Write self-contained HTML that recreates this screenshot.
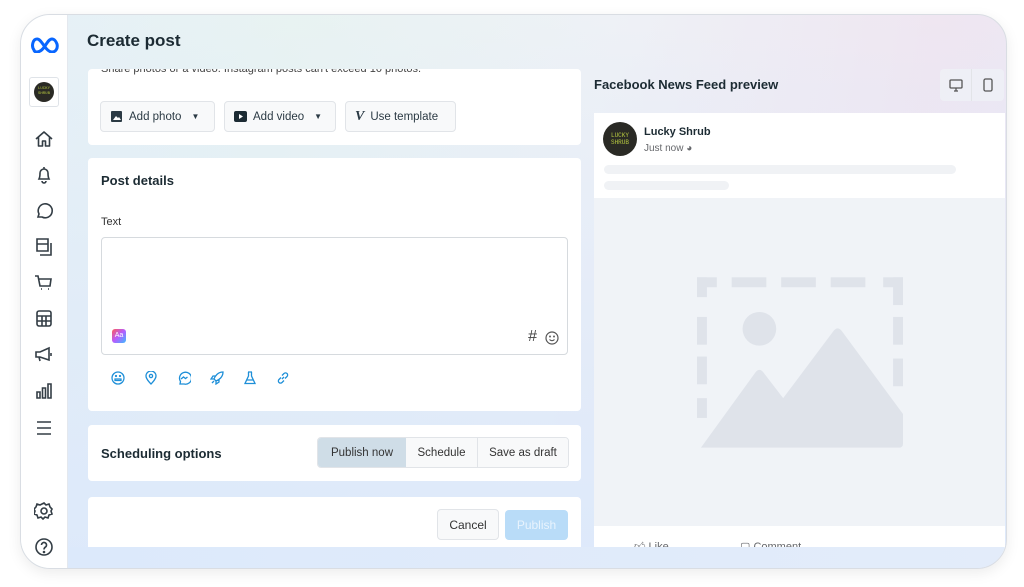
<!DOCTYPE html>
<html><head><meta charset="utf-8"><style>
*{box-sizing:border-box;margin:0;padding:0}
body{width:1024px;height:587px;background:#fff;font-family:"Liberation Sans",sans-serif;position:relative;overflow:hidden;color:#1c2b33}
.frame{position:absolute;left:20px;top:14px;width:987px;height:555px;border-radius:30px;border:1px solid #d9dde3;overflow:hidden;box-shadow:0 4px 14px rgba(0,0,0,.08);background:linear-gradient(100deg,#e6f0f7 0%,#e8f3f2 25%,#eef1f6 55%,#efe6f1 85%,#ece8f4 100%)}
.main{position:absolute;left:47px;top:0;right:0;bottom:0;background:linear-gradient(180deg,rgba(255,255,255,0) 0%,rgba(220,232,250,.6) 60%,#dde9fb 100%)}
.side{position:absolute;left:0;top:0;width:47px;height:100%;background:#fff;border-right:1px solid #e4e8ee}
.side svg{position:absolute;left:13px}
.card{position:absolute;background:#fff;border-radius:4px}
.btn{position:absolute;height:31px;border:1px solid #e1e4e8;border-radius:4px;background:#f8f9fa;font-size:11.5px;display:flex;align-items:center;padding:0 9px;gap:6px;color:#2b3a44;white-space:nowrap}
h1{position:absolute;left:66px;top:16px;font-size:17px;font-weight:bold;color:#1c2b33}
.t{position:absolute;font-size:13px;font-weight:bold;color:#1c2b33}
.bi{position:absolute;top:356px}
</style></head><body>
<div class="frame">
<div class="main"></div>
<div class="side">
<svg style="left:10px;top:22px" width="29" height="16" viewBox="0 0 29 16"><path d="M3 13C0 9 2 2 6 2c3 0 5 4 8 8s5 5 7 5c4 0 6-4 5-8-1-3-3-5-5-5-3 0-5 4-7 7s-5 6-8 6c-2 0-3-1-3-2" fill="none" stroke="#0866ff" stroke-width="3" stroke-linecap="round"/></svg>
<div style="position:absolute;left:8px;top:62px;width:30px;height:30px;border:1px solid #dfe3e8;border-radius:3px;background:#fff"><div style="margin:4px;width:20px;height:20px;border-radius:50%;background:#2a2a25;font-size:4px;color:#b7c940;text-align:center;line-height:5px;padding-top:5px;font-family:'Liberation Mono',monospace">LUCKY<br>SHRUB</div></div>
<svg style="top:115px" width="20" height="18" viewBox="0 0 20 18" fill="none" stroke="#333d45" stroke-width="1.6" stroke-linejoin="round"><path d="M2 9L10 2l8 7M4.5 7v9h4v-5h3v5h4V7"/></svg>
<svg style="top:151px" width="20" height="18" viewBox="0 0 20 18" fill="none" stroke="#333d45" stroke-width="1.6"><path d="M5 13c1-2 1-4 1-6a4 4 0 018 0c0 2 0 4 1 6zM8 15a2 2 0 004 0M10 1v2"/></svg>
<svg style="top:187px" width="20" height="18" viewBox="0 0 20 18" fill="none" stroke="#333d45" stroke-width="1.6"><path d="M4 15l1-3a7 7 0 113 3z"/></svg>
<svg style="top:223px" width="20" height="18" viewBox="0 0 20 18" fill="none" stroke="#333d45" stroke-width="1.6"><path d="M3 1h11v12H3zM3 6h11M17 5v12H6"/></svg>
<svg style="top:259px" width="20" height="18" viewBox="0 0 20 18" fill="none" stroke="#333d45" stroke-width="1.6"><path d="M1 2h3l2 10h10l1-7H5M7 15h1M14 15h1"/></svg>
<svg style="top:295px" width="20" height="18" viewBox="0 0 20 18" fill="none" stroke="#333d45" stroke-width="1.6"><rect x="3" y="1" width="14" height="15" rx="2"/><path d="M3 6h14M3 11h14M8 6v10M12 6v10"/></svg>
<svg style="top:331px" width="20" height="18" viewBox="0 0 20 18" fill="none" stroke="#333d45" stroke-width="1.6"><path d="M2 6h4l9-4v12l-9-3H2zM5 11l1 4M17 7v3"/></svg>
<svg style="top:367px" width="20" height="18" viewBox="0 0 20 18" fill="none" stroke="#333d45" stroke-width="1.6"><path d="M3 10h3v6H3zM8.5 6h3v10h-3zM14 2h3v14h-3z"/></svg>
<svg style="top:404px" width="20" height="18" viewBox="0 0 20 18" fill="none" stroke="#333d45" stroke-width="1.6"><path d="M3 3h14M3 9h14M3 15h14"/></svg>
<svg style="top:486px" width="20" height="20" viewBox="0 0 20 20" fill="none" stroke="#333d45" stroke-width="1.6"><circle cx="10" cy="10" r="3"/><path d="M10 2l2 2 3-1 1 3 2 2-1 2 1 3-3 1-1 3-3-1-2 2-2-2-3 1-1-3-3-1 1-3-1-2 2-2 1-3 3 1z"/></svg>
<svg style="top:522px" width="20" height="20" viewBox="0 0 20 20" fill="none" stroke="#333d45" stroke-width="1.6"><circle cx="10" cy="10" r="8"/><path d="M7.5 8a2.5 2.5 0 114 2c-1 .7-1.5 1-1.5 2.5"/><circle cx="10" cy="15" r=".5" fill="#333d45"/></svg>
</div>
<h1>Create post</h1>
<div class="card" style="left:67px;top:54px;width:493px;height:76px;overflow:hidden">
<div style="position:absolute;left:13px;top:-6px;font-size:11px;color:#444">Share photos or a video. Instagram posts can't exceed 10 photos.</div>
</div>
<div class="btn" style="left:79px;top:86px;width:115px"><svg width="13" height="13" viewBox="0 0 13 13"><rect x="1" y="1" width="11" height="11" rx="1" fill="#2b3a44"/><path d="M3 10l3-4 2 2 1-1 2 3z" fill="#fff"/></svg>Add photo<span style="font-size:8px;margin-left:4px">▼</span></div>
<div class="btn" style="left:203px;top:86px;width:112px"><svg width="13" height="13" viewBox="0 0 13 13"><rect x="0" y="1" width="13" height="11" rx="2" fill="#1c2b33"/><path d="M5 4l4 2.5L5 9z" fill="#fff"/></svg>Add video<span style="font-size:8px;margin-left:4px">▼</span></div>
<div class="btn" style="left:324px;top:86px;width:111px"><b style="font-size:14px;font-style:italic;font-family:'Liberation Serif',serif">V</b>Use template</div>
<div class="card" style="left:67px;top:143px;width:493px;height:253px">
<div class="t" style="left:13px;top:15px">Post details</div>
<div style="position:absolute;left:13px;top:58px;font-size:11px;color:#333">Text</div>
<div style="position:absolute;left:13px;top:79px;width:467px;height:118px;border:1px solid #d6dade;border-radius:4px">
<div style="position:absolute;left:10px;top:91px;width:14px;height:14px;border-radius:3px;background:linear-gradient(135deg,#ff5a5a,#b65cff,#3bbcff);font-size:7px;color:#fff;text-align:center;line-height:14px">Aa</div>
<div style="position:absolute;right:30px;top:90px;font-size:16px;color:#444">#</div>
<svg style="position:absolute;right:8px;top:93px" width="14" height="14" viewBox="0 0 14 14" fill="none" stroke="#555" stroke-width="1.2"><circle cx="7" cy="7" r="6"/><path d="M4.5 8.5c1.5 1.5 3.5 1.5 5 0"/><circle cx="5" cy="5.5" r=".4"/><circle cx="9" cy="5.5" r=".4"/></svg>
</div>
</div>
<svg class="bi" style="left:90px" width="14" height="14" viewBox="0 0 14 14" fill="none" stroke="#1e8fd8" stroke-width="1.3"><circle cx="7" cy="7" r="6"/><path d="M4 8h6v1.5H4z"/><circle cx="5" cy="5" r=".5"/><circle cx="9" cy="5" r=".5"/></svg>
<svg class="bi" style="left:123px" width="14" height="14" viewBox="0 0 14 14" fill="none" stroke="#1e8fd8" stroke-width="1.3"><path d="M7 13s-5-5-5-8a5 5 0 0110 0c0 3-5 8-5 8z"/><circle cx="7" cy="5" r="1.6"/></svg>
<svg class="bi" style="left:156px" width="14" height="14" viewBox="0 0 14 14" fill="none" stroke="#1e8fd8" stroke-width="1.3"><path d="M3 13l.5-2.5A6 6 0 117 13z"/><path d="M4 8l2.5-2 2 1.5L10.5 6"/></svg>
<svg class="bi" style="left:189px" width="14" height="14" viewBox="0 0 14 14" fill="none" stroke="#1e8fd8" stroke-width="1.3"><path d="M13 1C8 1 5 5 4 8l2 2c3-1 7-4 7-9zM4 8L1 8l2-3h3M6 10v3l3-2V8M2 12l2-2"/></svg>
<svg class="bi" style="left:222px" width="14" height="14" viewBox="0 0 14 14" fill="none" stroke="#1e8fd8" stroke-width="1.3"><path d="M5 1h4M5.5 1v4L2 12.5h10L8.5 5V1M3.5 9h7"/></svg>
<svg class="bi" style="left:255px" width="14" height="14" viewBox="0 0 14 14" fill="none" stroke="#1e8fd8" stroke-width="1.3"><path d="M6 8l2-2M5 6.5L3 8.5a2.1 2.1 0 003 3l2-2M9 7.5l2-2a2.1 2.1 0 00-3-3l-2 2"/></svg>
<div class="card" style="left:67px;top:410px;width:493px;height:56px">
<div class="t" style="left:13px;top:21px">Scheduling options</div>
<div style="position:absolute;left:229px;top:12px;height:31px;width:252px;border:1px solid #e1e4e8;border-radius:4px;display:flex;font-size:11.5px;color:#333;overflow:hidden;white-space:nowrap">
<div style="width:88px;background:#cfdde7;display:flex;align-items:center;justify-content:center">Publish now</div>
<div style="width:72px;background:#f8f9fa;border-right:1px solid #e1e4e8;display:flex;align-items:center;justify-content:center">Schedule</div>
<div style="flex:1;background:#f8f9fa;display:flex;align-items:center;justify-content:center">Save as draft</div>
</div>
</div>
<div class="card" style="left:67px;top:482px;width:493px;height:56px">
<div style="position:absolute;left:349px;top:12px;width:62px;height:31px;border:1px solid #e1e4e8;border-radius:4px;background:#f8f9fa;font-size:12px;display:flex;align-items:center;justify-content:center;color:#333">Cancel</div>
<div style="position:absolute;left:417px;top:13px;width:63px;height:30px;border-radius:4px;background:#b9dcf8;font-size:12px;display:flex;align-items:center;justify-content:center;color:#e8f3fd">Publish</div>
</div>
<div class="t" style="left:573px;top:62px">Facebook News Feed preview</div>
<div style="position:absolute;left:919px;top:54px;width:64px;height:32px;border-radius:4px;background:rgba(240,242,246,.7);display:flex">
<div style="width:32px;border-right:1px solid #e2e4e8;display:flex;align-items:center;justify-content:center"><svg width="14" height="13" viewBox="0 0 14 13" fill="none" stroke="#555" stroke-width="1.3"><rect x="1" y="1" width="12" height="8" rx="1"/><path d="M5 12h4M7 9v3"/></svg></div>
<div style="flex:1;display:flex;align-items:center;justify-content:center"><svg width="10" height="14" viewBox="0 0 10 14" fill="none" stroke="#555" stroke-width="1.3"><rect x="1" y="1" width="8" height="12" rx="1.5"/></svg></div>
</div>
<div style="position:absolute;left:573px;top:98px;width:411px;height:440px;background:#f0f3f7;overflow:hidden">
<div style="height:85px;background:#fff;position:relative">
<div style="position:absolute;left:9px;top:9px;width:34px;height:34px;border-radius:50%;background:#2a2a25;font-size:6px;color:#b7c940;text-align:center;line-height:7px;padding-top:10px;font-family:'Liberation Mono',monospace">LUCKY<br>SHRUB</div>
<div style="position:absolute;left:50px;top:13px;font-size:11px;font-weight:bold">Lucky Shrub</div>
<div style="position:absolute;left:50px;top:30px;font-size:10px;color:#65676b">Just now ◕</div>
<div style="position:absolute;left:10px;top:52px;width:352px;height:9px;border-radius:5px;background:#f0f2f5"></div>
<div style="position:absolute;left:10px;top:68px;width:125px;height:9px;border-radius:5px;background:#f0f2f5"></div>
</div>
<svg style="position:absolute;left:103px;top:164px" width="206" height="171" viewBox="0 0 208 172"><g fill="#dfe3ea"><rect x="0" y="0" width="10" height="20"/><rect x="0" y="0" width="20" height="10"/><rect x="35" y="0" width="35" height="10"/><rect x="85" y="0" width="35" height="10"/><rect x="135" y="0" width="35" height="10"/><rect x="188" y="0" width="20" height="10"/><rect x="198" y="0" width="10" height="28"/><rect x="0" y="40" width="10" height="28"/><rect x="0" y="80" width="10" height="28"/><rect x="198" y="40" width="10" height="28"/><rect x="198" y="82" width="10" height="28"/><rect x="0" y="122" width="10" height="20"/><circle cx="63" cy="52" r="17"/><path d="M4 172L59 96q4-5 8 0l20 26 51-68q4-5 8 0l62 84v30q0 4-4 4z"/></g></svg>
<div style="position:absolute;left:0;top:413px;width:100%;height:27px;background:#fff;font-size:11px;color:#65676b">
<span style="position:absolute;left:40px;top:14px">👍︎ Like</span><span style="position:absolute;left:146px;top:14px">▢ Comment</span></div>
</div>
<div style="position:absolute;left:47px;right:0;top:532px;height:23px;background:linear-gradient(90deg,#dce9fb,#e3ecfa)"></div>
</div>
</body></html>
